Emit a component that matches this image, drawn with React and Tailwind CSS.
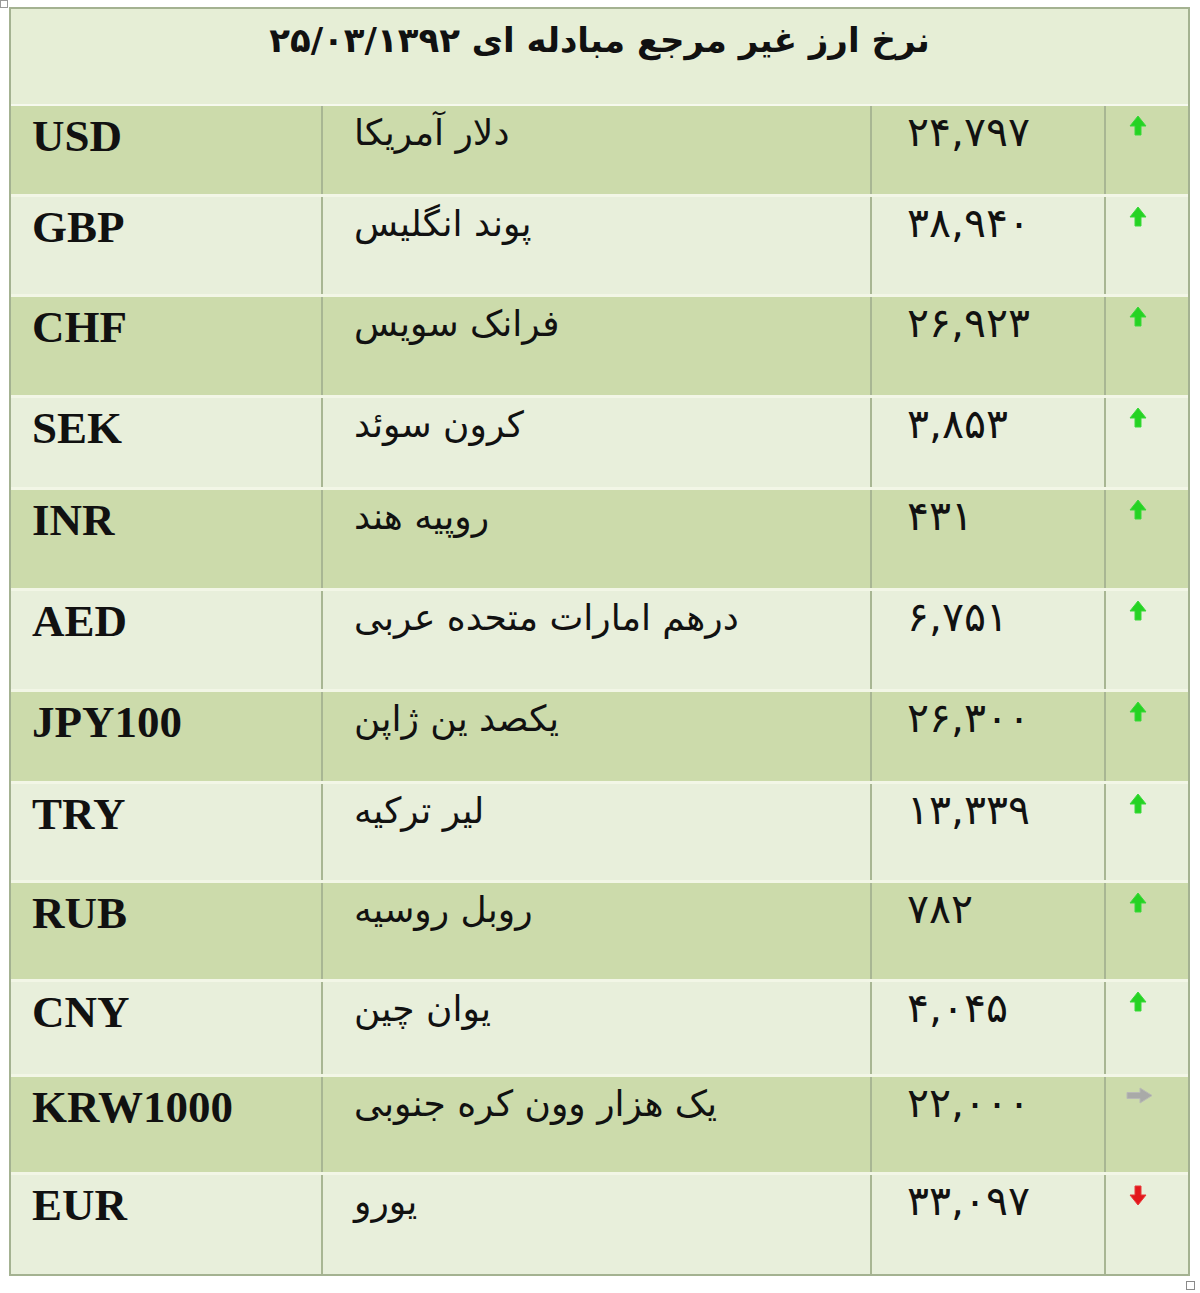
const rows = [
  { code: "USD", name: "دلار آمریکا", rate: "۲۴,۷۹۷", dir: "up", dark: true, h: "h-[91px]" },
  { code: "GBP", name: "پوند انگلیس", rate: "۳۸,۹۴۰", dir: "up", dark: false, h: "h-[100px]" },
  { code: "CHF", name: "فرانک سویس", rate: "۲۶,۹۲۳", dir: "up", dark: true, h: "h-[101px]" },
  { code: "SEK", name: "کرون سوئد", rate: "۳,۸۵۳", dir: "up", dark: false, h: "h-[92px]" },
  { code: "INR", name: "روپیه هند", rate: "۴۳۱", dir: "up", dark: true, h: "h-[101px]" },
  { code: "AED", name: "درهم امارات متحده عربی", rate: "۶,۷۵۱", dir: "up", dark: false, h: "h-[101px]" },
  { code: "JPY100", name: "یکصد ین ژاپن", rate: "۲۶,۳۰۰", dir: "up", dark: true, h: "h-[92px]" },
  { code: "TRY", name: "لیر ترکیه", rate: "۱۳,۳۳۹", dir: "up", dark: false, h: "h-[99px]" },
  { code: "RUB", name: "روبل روسیه", rate: "۷۸۲", dir: "up", dark: true, h: "h-[99px]" },
  { code: "CNY", name: "یوان چین", rate: "۴,۰۴۵", dir: "up", dark: false, h: "h-[95px]" },
  { code: "KRW1000", name: "یک هزار وون کره جنوبی", rate: "۲۲,۰۰۰", dir: "same", dark: true, h: "h-[98px]" },
  { code: "EUR", name: "یورو", rate: "۳۳,۰۹۷", dir: "down", dark: false, h: "h-[99px]" },
];

function Arrow({ dir }) {
  if (dir === "same") {
    return (
      <svg width="27" height="17" viewBox="0 0 27 17" className="ml-[-3px] mt-[1px]">
        <path d="M1 5.5 H14 V1 L26 8.5 L14 16 V11.5 H1 Z" fill="#a9aaa8" stroke="#b8b9b6" strokeWidth="1" strokeLinejoin="round" />
      </svg>
    );
  }
  if (dir === "down") {
    return (
      <svg width="18" height="21" viewBox="0 0 18 21" className="mt-[1px]">
        <path d="M6 1 H12 V10 H17 L9 20 L1 10 H6 Z" fill="#e3171c" stroke="#e83a3a" strokeWidth="1" strokeLinejoin="round" />
      </svg>
    );
  }
  return (
    <svg width="18" height="21" viewBox="0 0 18 21">
      <path d="M9 1 L17 11 H12 V20 H6 V11 H1 Z" fill="#25d323" stroke="#3bd93a" strokeWidth="1" strokeLinejoin="round" />
    </svg>
  );
}

export default function App() {
  return (
    <div className="relative w-[1200px] h-[1293px] bg-white pt-[7px] pl-[9px]">
      <div className="absolute left-0 top-0 w-[8px] h-[8px] border border-[#9a9a9a] bg-white" />
      <div className="w-[1181px] border-2 border-[#a4b291]">
        <div className="h-[97px] bg-[#e6eed6] flex justify-center pt-[8px] border-b-2 border-[#f6f9ee]">
          <div
            dir="rtl"
            className="font-['DejaVu_Sans',sans-serif] font-bold text-[34px] leading-[46px] text-[#111]"
          >
            نرخ ارز غیر مرجع مبادله ای ۲۵/۰۳/۱۳۹۲
          </div>
        </div>
        {rows.map((r, i) => (
          <div
            key={r.code}
            className={`grid grid-cols-[310px_549px_234px_84px] ${r.h} ${
              r.dark ? "bg-[#ccdbab]" : "bg-[#e8efdb]"
            } ${i < rows.length - 1 ? "border-b-[3px] border-[#f2f6e6]" : ""}`}
          >
            <div className="pl-[21px] pt-[8px] font-['Liberation_Serif',serif] font-bold text-[45px] leading-[44px] text-[#111]">
              {r.code}
            </div>
            <div className="border-l-2 border-[#a8b693] pl-[31px] pt-[5px]">
              <span dir="rtl" className="inline-block font-['DejaVu_Sans',sans-serif] text-[36px] leading-[44px] text-[#111]">
                {r.name}
              </span>
            </div>
            <div className="border-l-2 border-[#a8b693] pl-[35px] pt-[4px] font-['DejaVu_Sans',sans-serif] text-[41px] leading-[44px] text-[#111]">
              {r.rate}
            </div>
            <div className="border-l-2 border-[#a8b693] flex justify-start pt-[9px] pl-[23px]">
              <div>
                <Arrow dir={r.dir} />
              </div>
            </div>
          </div>
        ))}
      </div>
      <div className="absolute left-[1186px] top-[1281px] w-[9px] h-[9px] border border-[#8a8a8a] bg-white" />
    </div>
  );
}
